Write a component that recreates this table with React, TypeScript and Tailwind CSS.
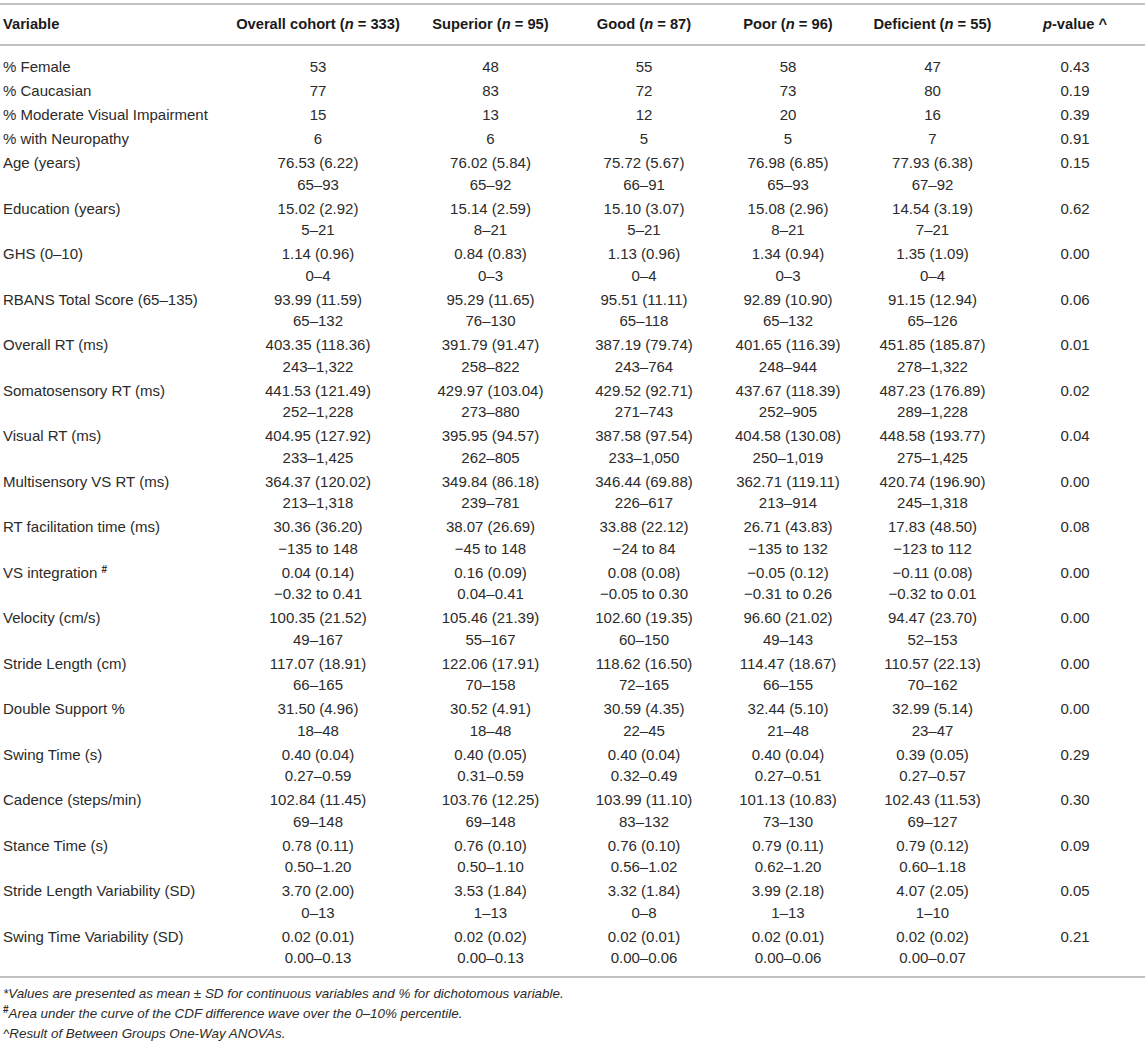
type Row = { label: React.ReactNode; cells: [string, string?][]; p: string }

const single = (label: string, vals: string[], p: string): Row => ({
  label,
  cells: vals.map((v) => [v] as [string, string?]),
  p,
})

const dbl = (label: React.ReactNode, vals: string[], p: string): Row => {
  const cells: [string, string?][] = []
  for (let i = 0; i < vals.length; i += 2) cells.push([vals[i], vals[i + 1]])
  return { label, cells, p }
}

const rows: Row[] = [
  single("% Female", ["53", "48", "55", "58", "47"], "0.43"),
  single("% Caucasian", ["77", "83", "72", "73", "80"], "0.19"),
  single("% Moderate Visual Impairment", ["15", "13", "12", "20", "16"], "0.39"),
  single("% with Neuropathy", ["6", "6", "5", "5", "7"], "0.91"),
  dbl("Age (years)", ["76.53 (6.22)", "65–93", "76.02 (5.84)", "65–92", "75.72 (5.67)", "66–91", "76.98 (6.85)", "65–93", "77.93 (6.38)", "67–92"], "0.15"),
  dbl("Education (years)", ["15.02 (2.92)", "5–21", "15.14 (2.59)", "8–21", "15.10 (3.07)", "5–21", "15.08 (2.96)", "8–21", "14.54 (3.19)", "7–21"], "0.62"),
  dbl("GHS (0–10)", ["1.14 (0.96)", "0–4", "0.84 (0.83)", "0–3", "1.13 (0.96)", "0–4", "1.34 (0.94)", "0–3", "1.35 (1.09)", "0–4"], "0.00"),
  dbl("RBANS Total Score (65–135)", ["93.99 (11.59)", "65–132", "95.29 (11.65)", "76–130", "95.51 (11.11)", "65–118", "92.89 (10.90)", "65–132", "91.15 (12.94)", "65–126"], "0.06"),
  dbl("Overall RT (ms)", ["403.35 (118.36)", "243–1,322", "391.79 (91.47)", "258–822", "387.19 (79.74)", "243–764", "401.65 (116.39)", "248–944", "451.85 (185.87)", "278–1,322"], "0.01"),
  dbl("Somatosensory RT (ms)", ["441.53 (121.49)", "252–1,228", "429.97 (103.04)", "273–880", "429.52 (92.71)", "271–743", "437.67 (118.39)", "252–905", "487.23 (176.89)", "289–1,228"], "0.02"),
  dbl("Visual RT (ms)", ["404.95 (127.92)", "233–1,425", "395.95 (94.57)", "262–805", "387.58 (97.54)", "233–1,050", "404.58 (130.08)", "250–1,019", "448.58 (193.77)", "275–1,425"], "0.04"),
  dbl("Multisensory VS RT (ms)", ["364.37 (120.02)", "213–1,318", "349.84 (86.18)", "239–781", "346.44 (69.88)", "226–617", "362.71 (119.11)", "213–914", "420.74 (196.90)", "245–1,318"], "0.00"),
  dbl("RT facilitation time (ms)", ["30.36 (36.20)", "−135 to 148", "38.07 (26.69)", "−45 to 148", "33.88 (22.12)", "−24 to 84", "26.71 (43.83)", "−135 to 132", "17.83 (48.50)", "−123 to 112"], "0.08"),
  dbl(
    <>
      VS integration <sup className="text-[10px] font-bold">#</sup>
    </>,
    ["0.04 (0.14)", "−0.32 to 0.41", "0.16 (0.09)", "0.04–0.41", "0.08 (0.08)", "−0.05 to 0.30", "−0.05 (0.12)", "−0.31 to 0.26", "−0.11 (0.08)", "−0.32 to 0.01"],
    "0.00",
  ),
  dbl("Velocity (cm/s)", ["100.35 (21.52)", "49–167", "105.46 (21.39)", "55–167", "102.60 (19.35)", "60–150", "96.60 (21.02)", "49–143", "94.47 (23.70)", "52–153"], "0.00"),
  dbl("Stride Length (cm)", ["117.07 (18.91)", "66–165", "122.06 (17.91)", "70–158", "118.62 (16.50)", "72–165", "114.47 (18.67)", "66–155", "110.57 (22.13)", "70–162"], "0.00"),
  dbl("Double Support %", ["31.50 (4.96)", "18–48", "30.52 (4.91)", "18–48", "30.59 (4.35)", "22–45", "32.44 (5.10)", "21–48", "32.99 (5.14)", "23–47"], "0.00"),
  dbl("Swing Time (s)", ["0.40 (0.04)", "0.27–0.59", "0.40 (0.05)", "0.31–0.59", "0.40 (0.04)", "0.32–0.49", "0.40 (0.04)", "0.27–0.51", "0.39 (0.05)", "0.27–0.57"], "0.29"),
  dbl("Cadence (steps/min)", ["102.84 (11.45)", "69–148", "103.76 (12.25)", "69–148", "103.99 (11.10)", "83–132", "101.13 (10.83)", "73–130", "102.43 (11.53)", "69–127"], "0.30"),
  dbl("Stance Time (s)", ["0.78 (0.11)", "0.50–1.20", "0.76 (0.10)", "0.50–1.10", "0.76 (0.10)", "0.56–1.02", "0.79 (0.11)", "0.62–1.20", "0.79 (0.12)", "0.60–1.18"], "0.09"),
  dbl("Stride Length Variability (SD)", ["3.70 (2.00)", "0–13", "3.53 (1.84)", "1–13", "3.32 (1.84)", "0–8", "3.99 (2.18)", "1–13", "4.07 (2.05)", "1–10"], "0.05"),
  dbl("Swing Time Variability (SD)", ["0.02 (0.01)", "0.00–0.13", "0.02 (0.02)", "0.00–0.13", "0.02 (0.01)", "0.00–0.06", "0.02 (0.01)", "0.00–0.06", "0.02 (0.02)", "0.00–0.07"], "0.21"),
]

const groups = [
  ["Overall cohort", "333"],
  ["Superior", "95"],
  ["Good", "87"],
  ["Poor", "96"],
  ["Deficient", "55"],
]

export default function App() {
  return (
    <div className="w-[1145px] bg-white pt-[3px] text-[15px] text-[#2b2b2b] font-['Liberation_Sans',Arial,sans-serif]">
      <table className="w-full table-fixed border-collapse">
        <colgroup>
          <col className="w-[227px]" />
          <col className="w-[182px]" />
          <col className="w-[163px]" />
          <col className="w-[144px]" />
          <col className="w-[144px]" />
          <col className="w-[145px]" />
          <col className="w-[140px]" />
        </colgroup>
        <thead>
          <tr className="h-[41px] border-y-2 border-[#c2c2c2] text-[#1a1a1a]">
            <th className="pl-[3px] text-left text-[14.7px] font-bold">Variable</th>
            {groups.map(([name, n]) => (
              <th key={name} className="text-center text-[14.7px] font-bold whitespace-nowrap">
                {name} (<i>n</i> = {n})
              </th>
            ))}
            <th className="text-center text-[14.7px] font-bold">
              <i>p</i>-value ^
            </th>
          </tr>
        </thead>
        <tbody>
          <tr className="h-[10px]">
            <td colSpan={7} />
          </tr>
          {rows.map((r, i) => (
            <tr key={i} className="align-top leading-[21.5px]">
              <td className="pl-[3px] py-[1.25px] whitespace-nowrap">{r.label}</td>
              {r.cells.map(([a, b], j) => (
                <td key={j} className="py-[1.25px] text-center whitespace-nowrap">
                  <div>{a}</div>
                  {b && <div>{b}</div>}
                </td>
              ))}
              <td className="py-[1.25px] text-center">{r.p}</td>
            </tr>
          ))}
          <tr className="h-[7px] border-b-2 border-[#c2c2c2]">
            <td colSpan={7} />
          </tr>
        </tbody>
      </table>
      <div className="pl-[3px] pt-[6px] text-[13.4px] italic leading-[20px] text-[#2b2b2b]">
        <p>*Values are presented as mean ± SD for continuous variables and % for dichotomous variable.</p>
        <p>
          <sup className="text-[10px] font-bold not-italic">#</sup>Area under the curve of the CDF difference wave over the 0–10% percentile.
        </p>
        <p>^Result of Between Groups One-Way ANOVAs.</p>
      </div>
    </div>
  )
}
